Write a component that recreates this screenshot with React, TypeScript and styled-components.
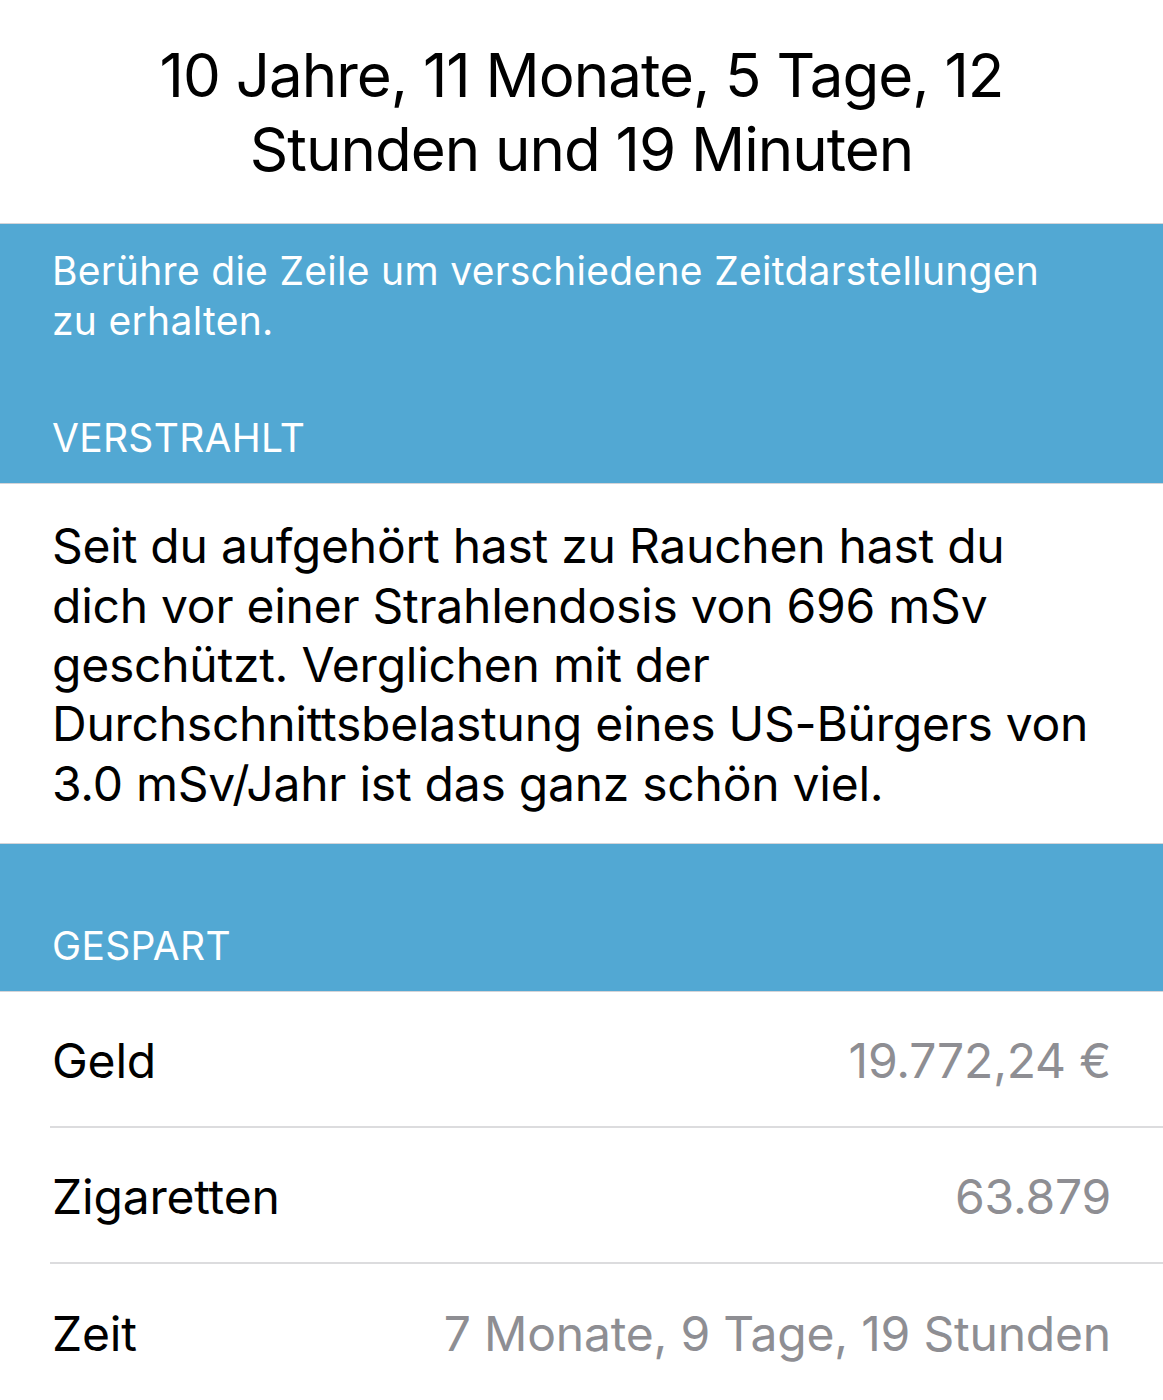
import React from "react";
import styled, { createGlobalStyle } from "styled-components";

const Global = createGlobalStyle`
  html, body { margin: 0; padding: 0; background: #ffffff; }
  body { font-family: Inter, "Noto Sans", "Liberation Sans", sans-serif; -webkit-font-smoothing: antialiased; }
`;

const Page = styled.div`
  width: 1163px;
  height: 1400px;
  overflow: hidden;
  background: #ffffff;
  display: flex;
  flex-direction: column;
`;

const Header = styled.header`
  height: 223px;
  box-sizing: border-box;
  padding: 38px 20px 0;
  display: flex;
  justify-content: center;
`;

const Title = styled.h1`
  margin: 0;
  font-weight: 400;
  font-size: 60px;
  line-height: 74px;
  letter-spacing: -1px;
  color: #000;
  text-align: center;
  white-space: nowrap;
`;

const Band = styled.section<{ $h: number }>`
  height: ${(p) => p.$h}px;
  box-sizing: border-box;
  background: #52a8d3;
  border-top: 1px solid #d4d4d8;
  border-bottom: 1px solid #d4d4d8;
  padding: 0 52px 20px;
  display: flex;
  flex-direction: column;
  justify-content: flex-end;
  color: #ffffff;
`;

const FooterNote = styled.p`
  margin: 0 0 auto;
  padding-top: 22px;
  font-size: 39px;
  line-height: 50px;
  letter-spacing: 0.3px;
  white-space: nowrap;
`;

const SectionTitle = styled.h2`
  margin: 0;
  font-weight: 400;
  font-size: 39px;
  line-height: 50px;
  letter-spacing: 0.3px;
`;

const Paragraph = styled.p`
  margin: 0;
  padding: 32px 52px 30px;
  font-size: 48px;
  line-height: 59.4px;
  letter-spacing: -0.25px;
  color: #000;
  white-space: nowrap;
`;

const List = styled.div`
  display: flex;
  flex-direction: column;
`;

const Row = styled.div<{ $last?: boolean }>`
  height: 136px;
  box-sizing: border-box;
  margin-left: 50px;
  padding: 2px 52px 0 2px;
  display: flex;
  align-items: center;
  justify-content: space-between;
  border-bottom: ${(p) => (p.$last ? "none" : "2px solid #dcdcde")};
  font-size: 48px;
  letter-spacing: -0.2px;
`;

const Label = styled.span`
  color: #000;
`;

const Value = styled.span`
  color: #8e8e93;
`;

export default function App() {
  return (
    <Page>
      <Global />
      <Header>
        <Title>
          10 Jahre, 11 Monate, 5 Tage, 12
          <br />
          Stunden und 19 Minuten
        </Title>
      </Header>
      <Band $h={262}>
        <FooterNote>
          Berühre die Zeile um verschiedene Zeitdarstellungen
          <br />
          zu erhalten.
        </FooterNote>
        <SectionTitle>VERSTRAHLT</SectionTitle>
      </Band>
      <Paragraph>
        Seit du aufgehört hast zu Rauchen hast du
        <br />
        dich vor einer Strahlendosis von 696 mSv
        <br />
        geschützt. Verglichen mit der
        <br />
        Durchschnittsbelastung eines US-Bürgers von
        <br />
        3.0 mSv/Jahr ist das ganz schön viel.
      </Paragraph>
      <Band $h={149}>
        <SectionTitle>GESPART</SectionTitle>
      </Band>
      <List>
        <Row>
          <Label>Geld</Label>
          <Value>19.772,24 €</Value>
        </Row>
        <Row>
          <Label>Zigaretten</Label>
          <Value>63.879</Value>
        </Row>
        <Row $last>
          <Label>Zeit</Label>
          <Value>7 Monate, 9 Tage, 19 Stunden</Value>
        </Row>
      </List>
    </Page>
  );
}
